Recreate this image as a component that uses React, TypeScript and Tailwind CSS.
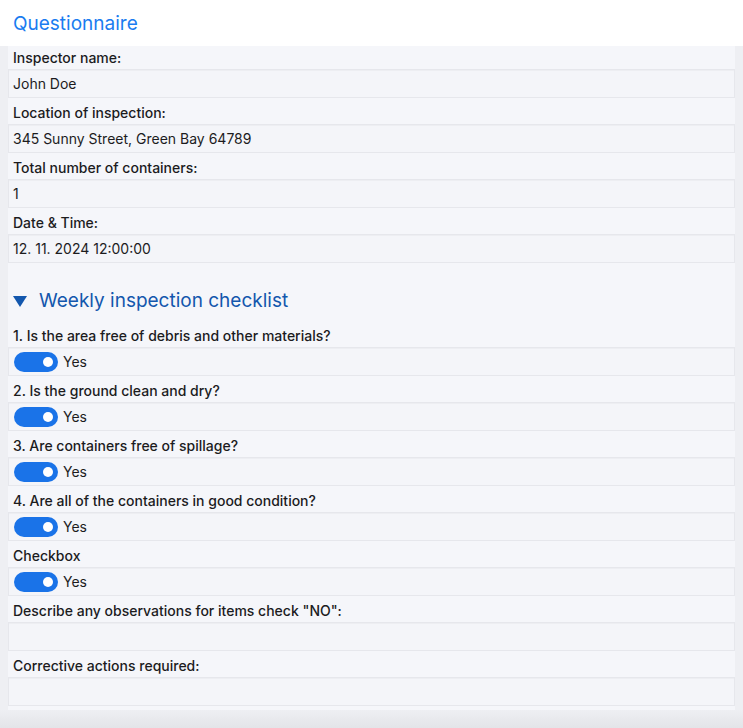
import React from "react";

const fields = [
  ["Inspector name:", "John Doe"],
  ["Location of inspection:", "345 Sunny Street, Green Bay 64789"],
  ["Total number of containers:", "1"],
  ["Date & Time:", "12. 11. 2024 12:00:00"],
];

const questions = [
  "1. Is the area free of debris and other materials?",
  "2. Is the ground clean and dry?",
  "3. Are containers free of spillage?",
  "4. Are all of the containers in good condition?",
  "Checkbox",
];

function Field({ label, children }: { label: string; children?: React.ReactNode }) {
  return (
    <div className="pb-[3px]">
      <div className="h-[23px] pt-[3px] pl-[5px] text-[14px] leading-[17px] font-medium text-[#1c1c1e]">{label}</div>
      <div className="h-[29px] border border-[#e6e7ec] bg-[#f4f5f9] shadow-[inset_0_1px_1px_rgba(0,0,0,0.03)] flex items-center pl-[4px] text-[14px] text-[#1c1c1e]">
        {children}
      </div>
    </div>
  );
}

export default function App() {
  return (
    <div className="min-h-[728px] bg-[#eeeff3]" style={{ fontFamily: "Inter, 'Noto Sans', sans-serif" }}>
      <div className="h-[46px] bg-white pl-[13px] pt-[10px] text-[19px] text-[#1a7cf0]">Questionnaire</div>
      <div className="ml-[8px] mr-[8px] bg-[#f5f6fa] pb-[1px]">
        {fields.map(([l, v]) => (
          <Field key={l} label={l}>{v}</Field>
        ))}
        <div className="flex items-center h-[58px] pt-[12px] pl-[5px]">
          <svg width="14" height="12" viewBox="0 0 14 12" className="mr-[12px]">
            <path d="M0 1h14L7 12z" fill="#1357ad" />
          </svg>
          <span className="text-[19px] text-[#1357ad]">Weekly inspection checklist</span>
        </div>
        {questions.map((q) => (
          <Field key={q} label={q}>
            <div className="w-[44px] h-[20px] rounded-full bg-[#1a73e8] flex items-center justify-end pr-[5px] ml-[1px]">
              <div className="w-[10px] h-[10px] rounded-full bg-white" />
            </div>
            <span className="ml-[5px]">Yes</span>
          </Field>
        ))}
        <Field label={'Describe any observations for items check "NO":'} />
        <Field label="Corrective actions required:" />
      </div>
      <div className="h-[20px] bg-gradient-to-b from-[#eeeff3] to-[#e2e3e7]" />
    </div>
  );
}
